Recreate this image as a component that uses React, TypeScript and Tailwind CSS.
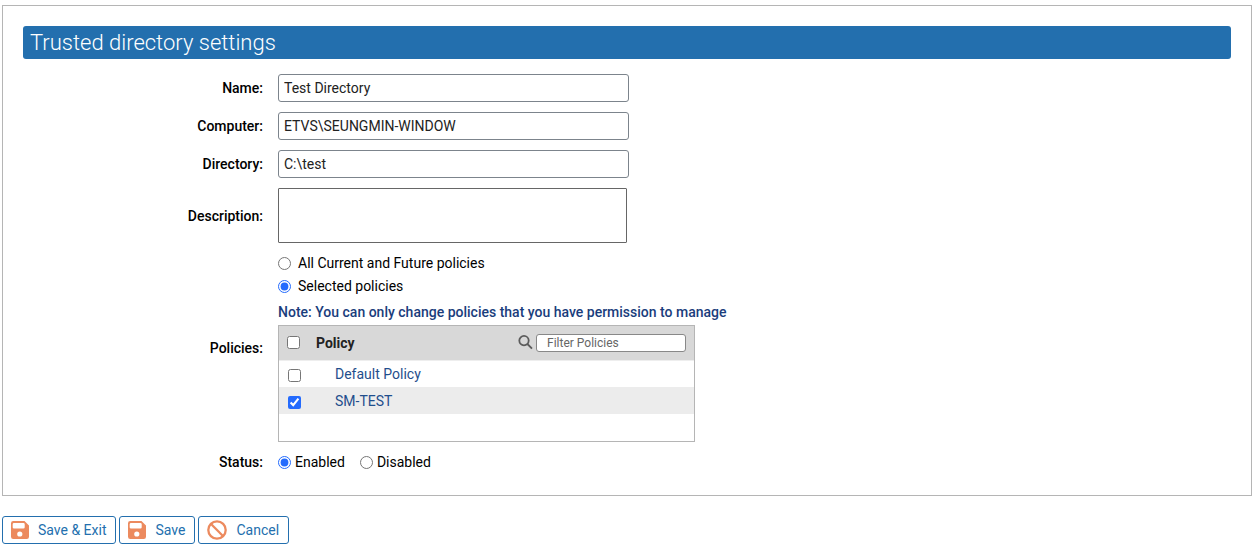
import React, { useState } from 'react';

interface Policy {
    id: number;
    name: string;
}

const policies: Policy[] = [
    { id: 1, name: 'Default Policy' },
    { id: 2, name: 'SM-TEST' },
];

const SaveIcon: React.FC = () => (
    <svg className="w-[18px] h-[18px]" viewBox="0 0 18 18" fill="#ec8a5e" fillRule="evenodd" aria-hidden="true">
        <path d="M2.2 0h11.3L18 4.5v11.3a2.2 2.2 0 0 1-2.2 2.2H2.2A2.2 2.2 0 0 1 0 15.8V2.2A2.2 2.2 0 0 1 2.2 0ZM3 2a1.3 1.3 0 0 0-1.3 1.3v3A1.3 1.3 0 0 0 3 7.6h9.4a1.3 1.3 0 0 0 1.3-1.3v-3A1.3 1.3 0 0 0 12.4 2ZM8.8 10.4a2.6 2.6 0 1 0 0 5.2 2.6 2.6 0 0 0 0-5.2Z" />
    </svg>
);

const CancelIcon: React.FC = () => (
    <svg className="w-5 h-5" viewBox="0 0 20 20" fill="none" stroke="#ec8a5e" strokeWidth={2.3} aria-hidden="true">
        <circle cx="10" cy="10" r="8.7" />
        <path d="M3.8 3.8l12.4 12.4" />
    </svg>
);

const SearchIcon: React.FC = () => (
    <svg className="w-[15px] h-[15px]" viewBox="0 0 15 15" fill="none" stroke="#5c5c5c" strokeWidth={1.8} aria-hidden="true">
        <circle cx="6" cy="5.6" r="4.7" />
        <path d="M9.4 9l4.6 4.6" />
    </svg>
);

interface RowProps {
    label: string;
    htmlFor?: string;
    children: React.ReactNode;
}

const Row: React.FC<RowProps> = ({ label, htmlFor, children }) => (
    <div className="flex items-center gap-[15px]">
        {htmlFor ? (
            <label htmlFor={htmlFor} className="w-60 shrink-0 text-right font-medium">{label}</label>
        ) : (
            <span className="w-60 shrink-0 text-right font-medium">{label}</span>
        )}
        {children}
    </div>
);

const fieldClass = 'w-[351px] h-7 px-[5px] border border-[#7c848c] rounded-[3px] bg-white text-[#222]';
const tickClass = 'block w-[13px] h-[13px] shrink-0 accent-[#246bfd]';
const buttonClass = 'flex items-center gap-[9px] h-7 pl-2 pr-[9px] border border-[#236fae] rounded-[3px] bg-white text-[#236fae] hover:bg-blue-50';

const App: React.FC = () => {
    const [name, setName] = useState('Test Directory');
    const [computer, setComputer] = useState('ETVS\\SEUNGMIN-WINDOW');
    const [directory, setDirectory] = useState('C:\\test');
    const [description, setDescription] = useState('');
    const [scope, setScope] = useState<'all' | 'selected'>('selected');
    const [status, setStatus] = useState<'enabled' | 'disabled'>('enabled');
    const [selected, setSelected] = useState<number[]>([2]);
    const [filter, setFilter] = useState('');

    const visible = policies.filter(p => p.name.toLowerCase().includes(filter.toLowerCase()));
    const allSelected = selected.length === policies.length;

    const togglePolicy = (id: number) => {
        setSelected(prev => (prev.includes(id) ? prev.filter(p => p !== id) : [...prev, id]));
    };

    return (
        <form
            className="px-[2px] pt-[5px] font-[Roboto,sans-serif] text-sm leading-5 text-black"
            onSubmit={e => e.preventDefault()}
        >
            <main className="mr-px px-5 pt-5 pb-[23px] border border-[#b5b5b5]">
                <h1 className="px-[7px] rounded-[3px] bg-[#236fae] text-[22px] leading-[33px] font-light text-white">
                    Trusted directory settings
                </h1>

                <div className="mt-[15px] flex flex-col gap-[10px]">
                    <Row label="Name:" htmlFor="name">
                        <input id="name" type="text" value={name} onChange={e => setName(e.target.value)} className={fieldClass} />
                    </Row>
                    <Row label="Computer:" htmlFor="computer">
                        <input id="computer" type="text" value={computer} onChange={e => setComputer(e.target.value)} className={fieldClass} />
                    </Row>
                    <Row label="Directory:" htmlFor="directory">
                        <input id="directory" type="text" value={directory} onChange={e => setDirectory(e.target.value)} className={fieldClass} />
                    </Row>
                    <Row label="Description:" htmlFor="description">
                        <textarea
                            id="description"
                            value={description}
                            onChange={e => setDescription(e.target.value)}
                            className="block w-[349px] h-[55px] p-1 border border-[#666] rounded-[1px] resize-none"
                        />
                    </Row>

                    <Row label="Policies:">
                        <div>
                            <div className="flex flex-col gap-[3px]">
                                <label className="flex items-center gap-[7px]">
                                    <input type="radio" name="scope" checked={scope === 'all'} onChange={() => setScope('all')} className={tickClass} />
                                    All Current and Future policies
                                </label>
                                <label className="flex items-center gap-[7px]">
                                    <input type="radio" name="scope" checked={scope === 'selected'} onChange={() => setScope('selected')} className={tickClass} />
                                    Selected policies
                                </label>
                            </div>
                            <p className="mt-[6px] mb-[3px] font-medium text-[#1a3d7c]">
                                Note: You can only change policies that you have permission to manage
                            </p>
                            <div className="w-[417px] h-[117px] border border-[#b5b5b5] overflow-y-auto">
                                <table className="w-full border-collapse text-left">
                                    <thead>
                                        <tr className="h-[34px] bg-[#d8d8d8] border-b border-[#eee]">
                                            <th className="w-[37px] pl-2">
                                                <input
                                                    type="checkbox"
                                                    aria-label="Select all"
                                                    checked={allSelected}
                                                    onChange={() => setSelected(allSelected ? [] : policies.map(p => p.id))}
                                                    className={tickClass}
                                                />
                                            </th>
                                            <th className="pr-2 font-bold text-[#222]">
                                                <div className="flex items-center justify-between">
                                                    Policy
                                                    <div className="flex items-center gap-[3px]">
                                                        <SearchIcon />
                                                        <input
                                                            type="text"
                                                            aria-label="Filter Policies"
                                                            placeholder="Filter Policies"
                                                            value={filter}
                                                            onChange={e => setFilter(e.target.value)}
                                                            className="w-[150px] h-[18px] px-[10px] border border-[#888] rounded-[3px] bg-white text-xs font-normal placeholder:text-[#666]"
                                                        />
                                                    </div>
                                                </div>
                                            </th>
                                        </tr>
                                    </thead>
                                    <tbody>
                                        {visible.map(p => (
                                            <tr key={p.id} className="h-[27px] even:bg-[#ececec]">
                                                <td className="pl-[9px] pt-[3px]">
                                                    <input
                                                        id={`policy-${p.id}`}
                                                        type="checkbox"
                                                        checked={selected.includes(p.id)}
                                                        onChange={() => togglePolicy(p.id)}
                                                        className={tickClass}
                                                    />
                                                </td>
                                                <td className="pl-[19px] text-[#1f4e8c]">
                                                    <label htmlFor={`policy-${p.id}`}>{p.name}</label>
                                                </td>
                                            </tr>
                                        ))}
                                    </tbody>
                                </table>
                            </div>
                        </div>
                    </Row>

                    <Row label="Status:">
                        <div className="flex items-center gap-[15px]">
                            <label className="flex items-center gap-1">
                                <input type="radio" name="status" checked={status === 'enabled'} onChange={() => setStatus('enabled')} className={tickClass} />
                                Enabled
                            </label>
                            <label className="flex items-center gap-1">
                                <input type="radio" name="status" checked={status === 'disabled'} onChange={() => setStatus('disabled')} className={tickClass} />
                                Disabled
                            </label>
                        </div>
                    </Row>
                </div>
            </main>

            <div className="mt-5 flex gap-[3px]">
                <button type="submit" className={buttonClass}>
                    <SaveIcon />
                    Save &amp; Exit
                </button>
                <button type="submit" className={buttonClass}>
                    <SaveIcon />
                    Save
                </button>
                <button type="button" className={buttonClass}>
                    <CancelIcon />
                    Cancel
                </button>
            </div>
        </form>
    );
};

export default App;
